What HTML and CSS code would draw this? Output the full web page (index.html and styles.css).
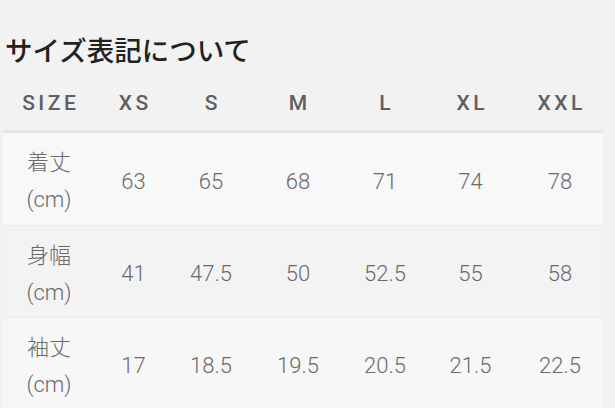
FILE: index.html
```html
<!DOCTYPE html>
<html lang="ja">
<head>
<meta charset="utf-8">
<link rel="stylesheet" href="styles.css">
</head>
<body>
<div class="page">
  <h1 class="title">サイズ表記について</h1>
  <div class="table">
    <div class="row head">
      <div class="cell">SIZE</div>
      <div class="cell">XS</div>
      <div class="cell">S</div>
      <div class="cell">M</div>
      <div class="cell">L</div>
      <div class="cell">XL</div>
      <div class="cell">XXL</div>
    </div>
    <div class="row body r1">
      <div class="cell label">着丈<br>(cm)</div>
      <div class="cell">63</div>
      <div class="cell">65</div>
      <div class="cell">68</div>
      <div class="cell">71</div>
      <div class="cell">74</div>
      <div class="cell">78</div>
    </div>
    <div class="row body r2">
      <div class="cell label">身幅<br>(cm)</div>
      <div class="cell">41</div>
      <div class="cell">47.5</div>
      <div class="cell">50</div>
      <div class="cell">52.5</div>
      <div class="cell">55</div>
      <div class="cell">58</div>
    </div>
    <div class="row body r3">
      <div class="cell label">袖丈<br>(cm)</div>
      <div class="cell">17</div>
      <div class="cell">18.5</div>
      <div class="cell">19.5</div>
      <div class="cell">20.5</div>
      <div class="cell">21.5</div>
      <div class="cell">22.5</div>
    </div>
  </div>
</div>
</body>
</html>
```

FILE: styles.css
```css
html, body {
  margin: 0;
  padding: 0;
  background: #f2f2f2;
}
body {
  font-family: Roboto, "Noto Sans CJK JP", sans-serif;
  width: 615px;
  height: 408px;
  overflow: hidden;
}
.page {
  padding: 31px 12px 0 3px;
}
.title {
  margin: 0 0 9px 2px;
  font-size: 27.5px;
  line-height: 36px;
  font-weight: 500;
  color: #222222;
  font-family: "Noto Sans CJK JP", sans-serif;
}
.table {
  width: 600px;
  display: flex;
  flex-direction: column;
}
.row {
  display: grid;
  grid-template-columns: 92px 77px 78px 96px 78px 93px 86px;
  align-items: center;
}
.cell {
  text-align: center;
}
.head {
  height: 54px;
  border-bottom: 3px solid #e4e4e4;
}
.head .cell {
  font-size: 21px;
  font-weight: 500;
  color: #5f5f5f;
  letter-spacing: 3.5px;
  padding-left: 3.5px;
}
.body {
  height: 92px;
  box-sizing: border-box;
  padding-top: 4px;
  border-top: 1px solid #ececec;
}
.body.r1 {
  border-top: none;
  background: #f8f8f8;
}
.body.r2 {
  background: #f3f3f3;
}
.body.r3 {
  background: #f7f7f7;
}
.body .cell {
  font-size: 22px;
  font-weight: 300;
  color: #6a6a6a;
}
.body .label {
  font-size: 22px;
  line-height: 37px;
  font-weight: 300;
}
```
